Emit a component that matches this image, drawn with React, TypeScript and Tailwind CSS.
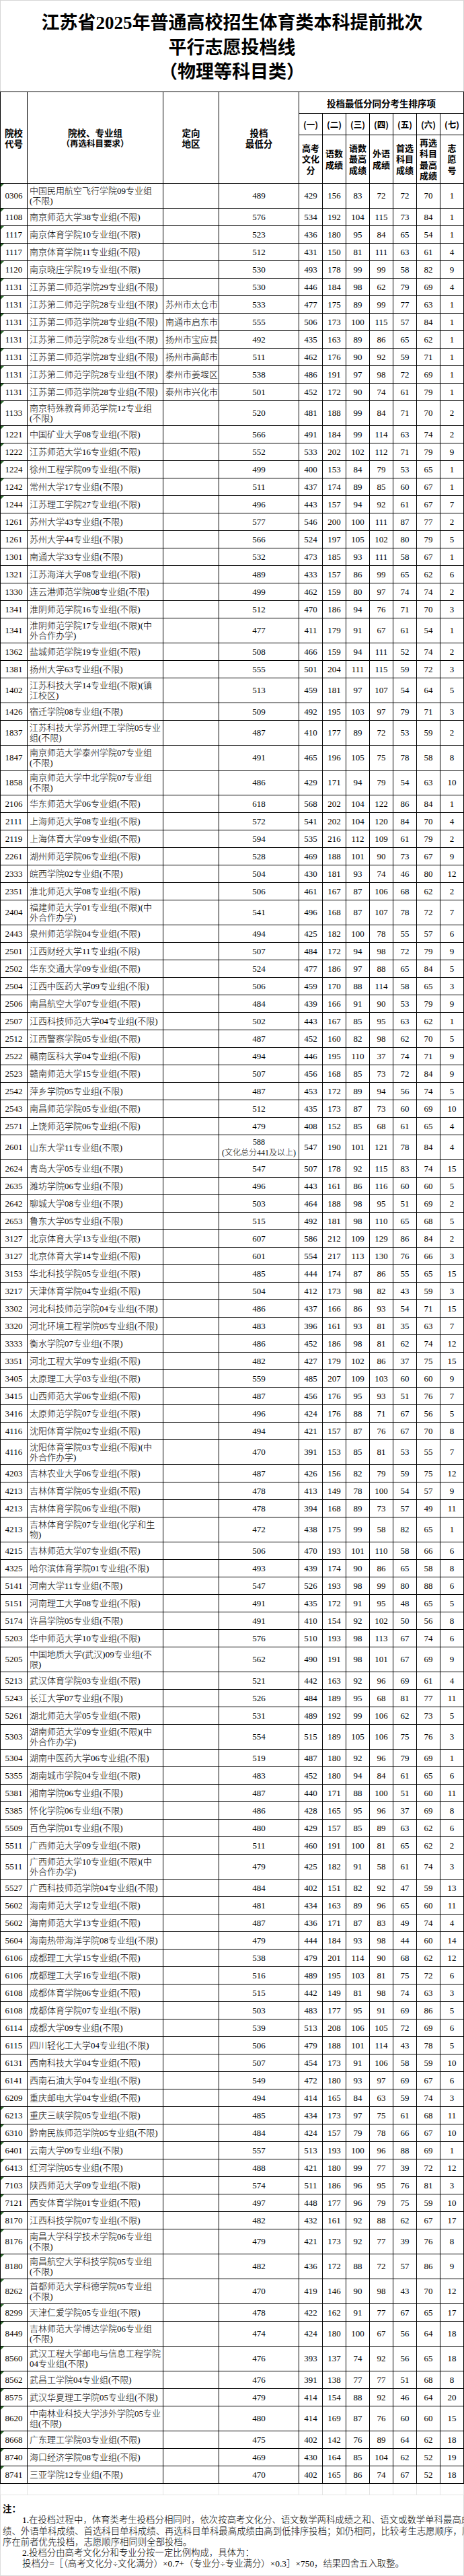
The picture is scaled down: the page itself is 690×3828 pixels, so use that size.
import React from "react";

const DATA = `0306,中国民用航空飞行学院09专业组|(不限),,489,429,156,83,72,72,70,1
1108,南京师范大学38专业组(不限),,576,534,192,104,115,73,84,1
1117,南京体育学院10专业组(不限),,523,436,180,95,84,65,54,1
1117,南京体育学院11专业组(不限),,512,431,150,81,111,63,61,4
1120,南京晓庄学院19专业组(不限),,530,493,178,99,99,58,82,9
1131,江苏第二师范学院29专业组(不限),,530,446,184,98,62,79,69,4
1131,江苏第二师范学院28专业组(不限),苏州市太仓市,533,477,175,89,99,77,63,1
1131,江苏第二师范学院28专业组(不限),南通市启东市,555,506,173,100,115,57,84,1
1131,江苏第二师范学院28专业组(不限),扬州市宝应县,492,435,163,89,86,65,62,1
1131,江苏第二师范学院28专业组(不限),扬州市高邮市,511,462,176,90,92,59,71,1
1131,江苏第二师范学院28专业组(不限),泰州市姜堰区,538,486,191,97,98,72,69,1
1131,江苏第二师范学院28专业组(不限),泰州市兴化市,501,452,172,90,74,61,79,1
1133,南京特殊教育师范学院12专业组|(不限),,520,481,188,99,84,71,70,2
1221,中国矿业大学08专业组(不限),,566,491,184,99,114,63,74,2
1222,江苏师范大学16专业组(不限),,552,533,202,102,112,71,79,9
1224,徐州工程学院09专业组(不限),,499,400,153,84,79,53,65,1
1242,常州大学17专业组(不限),,511,437,174,89,85,60,67,1
1244,江苏理工学院27专业组(不限),,496,443,157,94,92,61,67,7
1261,苏州大学43专业组(不限),,577,546,200,100,111,87,77,2
1261,苏州大学44专业组(不限),,566,524,197,105,102,80,79,5
1301,南通大学33专业组(不限),,532,473,185,93,111,58,67,1
1321,江苏海洋大学08专业组(不限),,489,433,157,86,99,65,62,6
1330,连云港师范学院08专业组(不限),,499,462,159,80,97,74,74,2
1341,淮阴师范学院16专业组(不限),,512,470,186,94,76,71,70,3
1341,淮阴师范学院17专业组(不限)(中|外合作办学),,477,411,179,91,67,61,54,1
1362,盐城师范学院19专业组(不限),,508,466,159,94,111,52,74,2
1381,扬州大学63专业组(不限),,555,501,204,111,115,59,72,3
1402,江苏科技大学14专业组(不限)(镇|江校区),,513,459,181,97,107,54,64,5
1426,宿迁学院08专业组(不限),,509,492,195,103,97,79,71,3
1837,江苏科技大学苏州理工学院05专业|组(不限),,487,410,177,89,72,53,59,2
1847,南京师范大学泰州学院07专业组|(不限),,491,465,196,105,75,78,58,8
1858,南京师范大学中北学院07专业组|(不限),,486,429,171,94,79,54,63,10
2106,华东师范大学06专业组(不限),,618,568,202,104,122,86,84,1
2111,上海师范大学08专业组(不限),,572,541,202,104,120,84,70,4
2119,上海体育大学09专业组(不限),,594,535,216,112,109,61,79,2
2261,湖州师范学院06专业组(不限),,528,469,188,101,90,73,67,9
2333,皖西学院02专业组(不限),,504,430,181,93,74,46,80,12
2351,淮北师范大学08专业组(不限),,506,461,167,87,106,68,62,2
2404,福建师范大学01专业组(不限)(中|外合作办学),,541,496,168,87,107,78,72,7
2443,泉州师范学院04专业组(不限),,494,425,182,100,78,55,57,6
2501,江西财经大学11专业组(不限),,507,484,172,94,98,72,79,9
2502,华东交通大学09专业组(不限),,524,477,186,97,88,65,84,5
2504,江西中医药大学09专业组(不限),,506,459,170,88,114,58,65,3
2506,南昌航空大学07专业组(不限),,484,439,166,91,90,53,79,9
2507,江西科技师范大学04专业组(不限),,502,443,167,85,95,63,62,1
2512,江西警察学院05专业组(不限),,487,452,160,82,98,62,70,5
2522,赣南医科大学04专业组(不限),,494,446,195,110,37,74,71,9
2523,赣南师范大学15专业组(不限),,507,456,168,85,73,72,84,9
2542,萍乡学院05专业组(不限),,487,453,172,89,94,56,74,5
2543,南昌师范学院05专业组(不限),,512,435,173,87,73,60,69,10
2571,上饶师范学院06专业组(不限),,479,408,152,85,68,61,65,4
2601,山东大学11专业组(不限),,588|(文化总分441及以上),547,190,101,121,78,84,4
2624,青岛大学05专业组(不限),,547,507,178,92,115,83,74,15
2635,潍坊学院06专业组(不限),,496,443,161,86,116,60,60,5
2642,聊城大学08专业组(不限),,503,464,188,98,95,51,69,2
2653,鲁东大学05专业组(不限),,515,492,181,98,110,65,68,5
3127,北京体育大学13专业组(不限),,607,586,212,109,129,86,84,2
3127,北京体育大学14专业组(不限),,601,554,217,113,130,76,66,3
3153,华北科技学院05专业组(不限),,485,444,174,87,86,55,65,15
3217,天津体育学院04专业组(不限),,504,412,173,98,82,43,59,3
3302,河北科技师范学院04专业组(不限),,486,437,166,86,93,54,71,15
3320,河北环境工程学院05专业组(不限),,483,396,161,93,81,35,63,7
3333,衡水学院07专业组(不限),,486,452,186,98,81,62,74,12
3351,河北工程大学09专业组(不限),,482,427,179,102,86,37,75,15
3405,太原理工大学03专业组(不限),,559,485,207,109,103,60,60,9
3415,山西师范大学06专业组(不限),,487,456,176,95,93,51,76,7
3416,太原师范学院07专业组(不限),,496,424,176,88,71,67,56,5
4116,沈阳体育学院02专业组(不限),,494,421,157,87,76,67,70,8
4116,沈阳体育学院03专业组(不限)(中|外合作办学),,470,391,153,85,81,53,55,7
4203,吉林农业大学06专业组(不限),,487,426,156,82,79,59,75,12
4213,吉林体育学院05专业组(不限),,478,413,149,78,100,54,57,9
4213,吉林体育学院06专业组(不限),,478,394,168,89,73,57,49,11
4213,吉林体育学院07专业组(化学和生|物),,472,438,175,99,58,82,65,1
4215,吉林师范大学07专业组(不限),,506,470,193,101,110,58,66,6
4325,哈尔滨体育学院01专业组(不限),,493,439,174,90,86,65,58,8
5141,河南大学11专业组(不限),,547,526,193,98,99,80,88,6
5151,河南理工大学08专业组(不限),,491,435,172,91,95,48,65,5
5174,许昌学院05专业组(不限),,491,410,154,92,102,50,56,8
5203,华中师范大学10专业组(不限),,576,510,193,98,113,67,74,6
5205,中国地质大学(武汉)09专业组(不|限),,562,490,191,98,101,67,69,9
5213,武汉体育学院03专业组(不限),,521,442,163,92,96,69,61,4
5243,长江大学07专业组(不限),,526,484,189,95,68,81,77,11
5261,湖北师范大学05专业组(不限),,531,489,192,99,106,62,73,5
5303,湖南师范大学09专业组(不限)(中|外合作办学),,554,515,189,105,106,75,76,3
5304,湖南中医药大学06专业组(不限),,519,487,180,92,96,79,69,1
5355,湖南城市学院04专业组(不限),,483,452,180,94,84,61,65,6
5381,湘南学院06专业组(不限),,487,440,171,88,100,51,60,11
5385,怀化学院06专业组(不限),,486,428,165,95,96,37,69,8
5509,百色学院01专业组(不限),,480,429,157,85,89,63,62,6
5511,广西师范大学09专业组(不限),,511,460,191,100,81,65,62,2
5511,广西师范大学10专业组(不限)(中|外合作办学),,479,425,182,91,58,61,74,3
5527,广西科技师范学院04专业组(不限),,484,402,151,82,92,47,59,13
5602,海南师范大学12专业组(不限),,481,434,163,89,96,65,60,11
5602,海南师范大学13专业组(不限),,487,436,171,87,83,49,74,4
5604,海南热带海洋学院08专业组(不限),,479,444,184,93,98,44,60,14
6106,成都理工大学15专业组(不限),,538,479,201,114,90,68,62,12
6106,成都理工大学16专业组(不限),,516,489,195,103,81,75,72,6
6108,成都体育学院06专业组(不限),,515,442,149,81,98,74,63,3
6108,成都体育学院07专业组(不限),,503,483,177,95,91,69,86,5
6114,成都大学09专业组(不限),,539,513,208,106,105,72,69,6
6115,四川轻化工大学04专业组(不限),,506,479,188,101,114,43,78,5
6131,西南科技大学04专业组(不限),,507,454,173,91,106,58,59,10
6141,西南石油大学04专业组(不限),,549,472,180,93,97,69,67,6
6209,重庆邮电大学04专业组(不限),,494,414,165,84,63,59,74,3
6213,重庆三峡学院05专业组(不限),,485,434,173,97,75,61,68,11
6310,黔南民族师范学院05专业组(不限),,484,424,157,79,78,66,67,10
6401,云南大学09专业组(不限),,557,513,193,100,96,88,69,1
6413,红河学院05专业组(不限),,488,421,180,99,77,39,72,12
7103,陕西师范大学09专业组(不限),,574,511,186,96,95,76,81,3
7121,西安体育学院01专业组(不限),,497,448,177,96,79,75,59,10
8170,江西科技学院07专业组(不限),,482,432,161,92,88,62,67,17
8176,南昌大学科学技术学院06专业组|(不限),,479,421,173,92,77,39,76,8
8180,南昌航空大学科技学院05专业组|(不限),,482,436,172,88,72,57,86,9
8262,首都师范大学科德学院05专业组|(不限),,470,419,146,90,98,43,70,12
8299,天津仁爱学院05专业组(不限),,478,422,162,91,77,67,65,17
8449,吉林师范大学博达学院06专业组|(不限),,474,424,180,100,67,56,64,18
8560,武汉工程大学邮电与信息工程学院|04专业组(不限),,476,393,137,74,92,56,65,18
8562,武昌工学院04专业组(不限),,476,391,138,77,77,51,68,8
8575,武汉华夏理工学院05专业组(不限),,479,414,154,88,92,46,64,20
8620,中南林业科技大学涉外学院05专业|组(不限),,480,414,169,87,76,60,60,15
8668,广东理工学院03专业组(不限),,475,402,142,76,89,64,62,18
8740,海口经济学院08专业组(不限),,469,430,164,85,104,62,52,19
8741,三亚学院12专业组(不限),,470,402,165,86,74,67,52,18`;

const rows = DATA.split("\n").map((l) => l.split(","));

// rows that carry the little green "number stored as text" corner mark
const marked = (i: number) => i <= 17 || i >= 104;

const GRID = "grid grid-cols-[40px_202px_83px_119px_35px_35px_35px_35px_35px_35px_35px]";

function Lines({ text }: { text: string }) {
  return (
    <>
      {text.split("|").map((t, i) => (
        <span key={i} className="block whitespace-nowrap">
          {t}
        </span>
      ))}
    </>
  );
}

function Row({ r, i }: { r: string[]; i: number }) {
  const [code, name, region, score, ...rest] = r;
  const tall = name.includes("|") || score.includes("|");
  return (
    <div className={`${GRID} border-b border-black ${tall ? "h-[37px]" : "h-[26px]"}`}>
      <div className="relative flex items-center justify-center border-r border-black">
        {marked(i) && (
          <span className="absolute left-0 top-0 border-t-[5px] border-r-[5px] border-t-[#2f6b2f] border-r-transparent" />
        )}
        {code}
      </div>
      <div className="flex flex-col justify-center border-r border-black pl-[3px] leading-[15px]">
        <Lines text={name} />
      </div>
      <div className="flex items-center border-r border-black pl-[3px] whitespace-nowrap">{region}</div>
      {score.includes("|") ? (
        <div className="flex flex-col items-center justify-center border-r border-black text-[12px] leading-[16px]">
          <Lines text={score} />
        </div>
      ) : (
        <div className="flex items-center justify-center border-r border-black">{score}</div>
      )}
      {rest.map((v, k) => (
        <div key={k} className="flex items-center justify-center border-r border-black">
          {v}
        </div>
      ))}
    </div>
  );
}

const orders = ["(一)", "(二)", "(三)", "(四)", "(五)", "(六)", "(七)"];
const labels = [
  ["高考", "文化", "分"],
  ["语数", "成绩"],
  ["语数", "最高", "成绩"],
  ["外语", "成绩"],
  ["首选", "科目", "成绩"],
  ["再选", "科目", "最高", "成绩"],
  ["志", "愿", "号"],
];

function Header() {
  return (
    <div className="flex h-[136px] border-b border-black font-['Noto_Sans_CJK_SC',sans-serif] font-bold text-[13.5px] leading-[16px]">
      <div className="flex w-[40px] flex-none flex-col items-center justify-center border-r border-black">
        <span>院校</span>
        <span>代号</span>
      </div>
      <div className="flex w-[202px] flex-none flex-col items-center justify-center border-r border-black">
        <span>院校、专业组</span>
        <span className="text-[12.5px]">（再选科目要求）</span>
      </div>
      <div className="flex w-[83px] flex-none flex-col items-center justify-center border-r border-black">
        <span>定向</span>
        <span>地区</span>
      </div>
      <div className="flex w-[119px] flex-none flex-col items-center justify-center border-r border-black">
        <span>投档</span>
        <span>最低分</span>
      </div>
      <div className="flex w-[245px] flex-none flex-col">
        <div className="flex h-[32px] items-center justify-center border-b border-r border-black text-[13.5px]">
          投档最低分同分考生排序项
        </div>
        <div className="flex h-[32px] border-b border-black">
          {orders.map((o) => (
            <div key={o} className="flex w-[35px] items-center justify-center border-r border-black text-[12.5px] whitespace-nowrap">
              {o}
            </div>
          ))}
        </div>
        <div className="flex flex-1">
          {labels.map((l, k) => (
            <div key={k} className="flex w-[35px] flex-col items-center justify-center border-r border-black text-[13px] leading-[16.5px]">
              {l.map((t) => (
                <span key={t}>{t}</span>
              ))}
            </div>
          ))}
        </div>
      </div>
    </div>
  );
}

export default function App() {
  return (
    <div className="w-[690px] bg-white text-black font-['Liberation_Serif','Noto_Sans_CJK_SC',serif]">
      <div className="h-[136px] border-l border-r border-t border-[#d6d6d6] pt-[15px] text-center text-[27px] font-bold leading-[36.5px]">
        <div>江苏省2025年普通高校招生体育类本科提前批次</div>
        <div>平行志愿投档线</div>
        <div>（物理等科目类）</div>
      </div>

      <div className="border-l border-t border-black text-[13px] font-light">
        <Header />
        {rows.map((r, i) => (
          <Row key={i} r={r} i={i} />
        ))}
      </div>

      <div className={`${GRID} h-[17px] border-b border-l border-[#e4e4e4]`}>
        {Array.from({ length: 11 }).map((_, k) => (
          <div key={k} className="border-r border-[#e4e4e4]" />
        ))}
      </div>

      <div className="h-[120px] border-b border-l border-r border-[#dcdcdc] pl-[3px] pt-[13px] text-[13.4px] font-light leading-[16.3px]">
        <div className="font-bold">注：</div>
        <div className="whitespace-nowrap pl-[29px]">
          1.在投档过程中，体育类考生投档分相同时，依次按高考文化分、语文数学两科成绩之和、语文或数学单科最高成
        </div>
        <div className="whitespace-nowrap">
          绩、外语单科成绩、首选科目单科成绩、再选科目单科最高成绩由高到低排序投档；如仍相同，比较考生志愿顺序，顺
        </div>
        <div className="whitespace-nowrap">序在前者优先投档，志愿顺序相同则全部投档。</div>
        <div className="whitespace-nowrap pl-[29px]">2.投档分由高考文化分和专业分按一定比例构成，具体为：</div>
        <div className="whitespace-nowrap pl-[29px]">
          投档分=［（高考文化分÷文化满分）×0.7+（专业分÷专业满分）×0.3］×750，结果四舍五入取整。
        </div>
      </div>
    </div>
  );
}
